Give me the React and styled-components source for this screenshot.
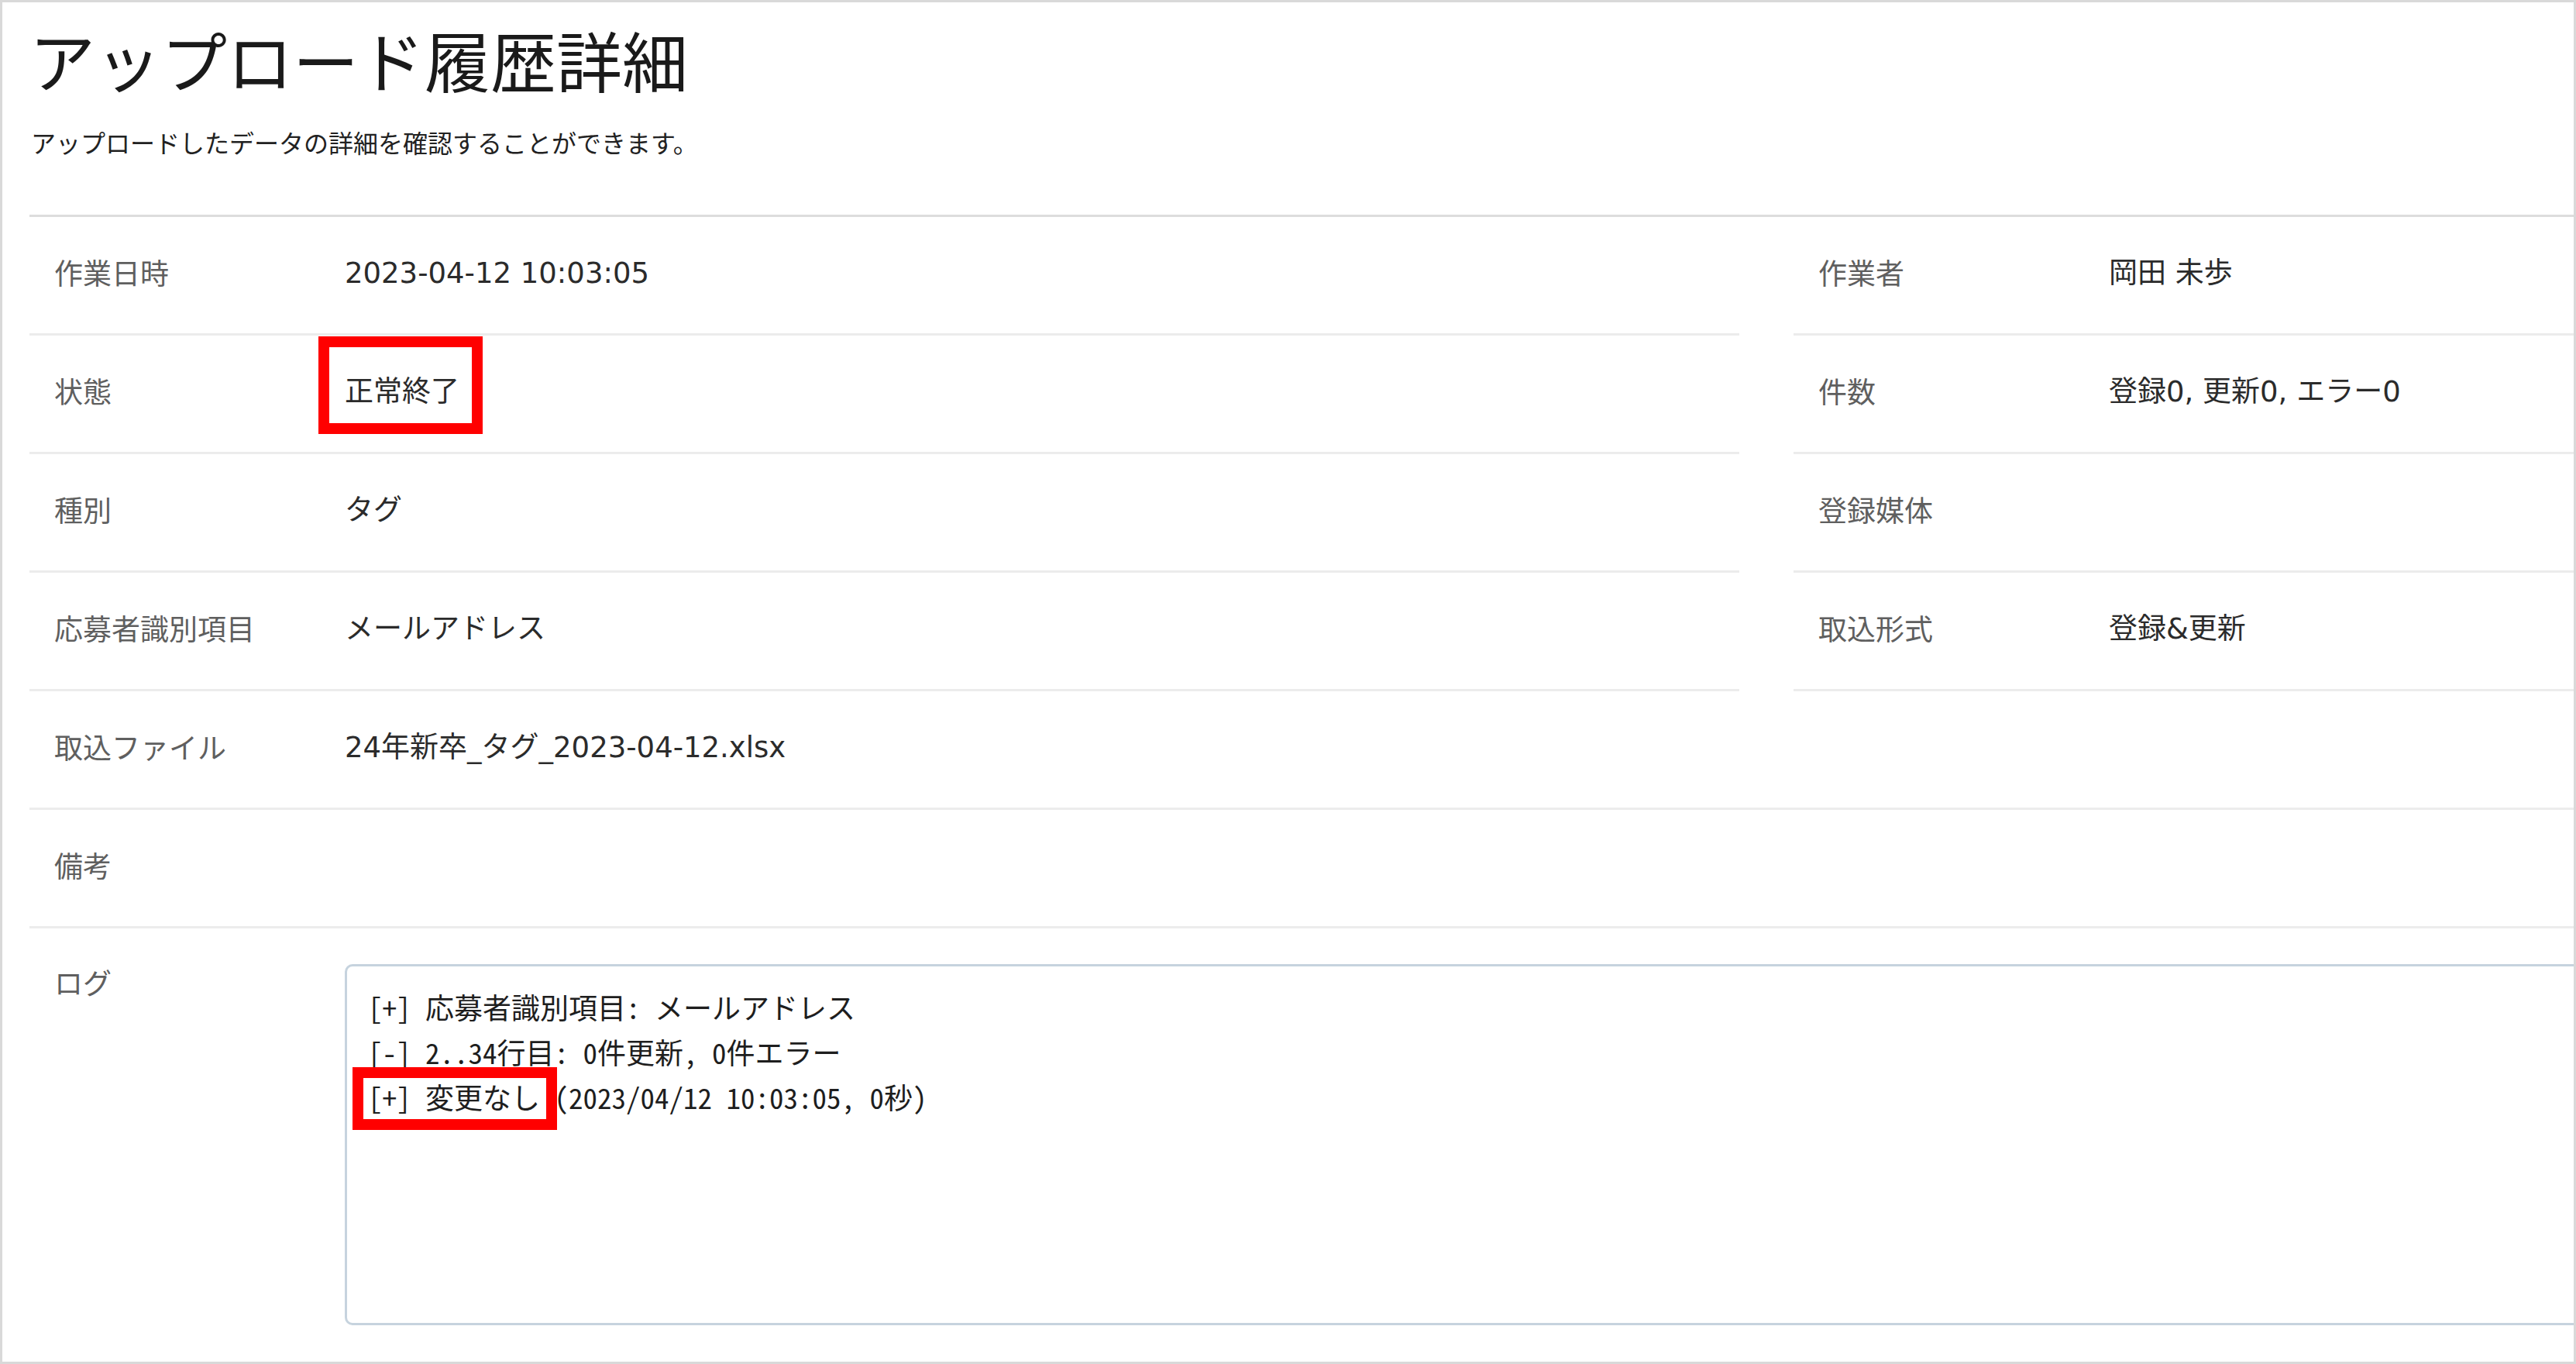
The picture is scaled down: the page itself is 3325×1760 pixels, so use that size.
import React from 'react'
import styled, {createGlobalStyle} from 'styled-components'

const GlobalStyle = createGlobalStyle`
	html, body {
		margin: 0;
		padding: 0;
		background: #ffffff;
	}
	body {
		font-family: "Noto Sans CJK JP", "Noto Sans", sans-serif;
		color: #333333;
	}
`

const summaryLeft = [
	{label: '作業日時', value: '2023-04-12 10:03:05'},
	{label: '状態', value: '正常終了', marked: true},
	{label: '種別', value: 'タグ'},
	{label: '応募者識別項目', value: 'メールアドレス'},
]

const summaryRight = [
	{label: '作業者', value: '岡田 未歩'},
	{label: '件数', value: '登録0, 更新0, エラー0'},
	{label: '登録媒体', value: ''},
	{label: '取込形式', value: '登録&更新'},
]

const logLines = [
	{text: '[+] 応募者識別項目: メールアドレス'},
	{text: '[-] 2..34行目: 0件更新, 0件エラー'},
	{text: '[+] 変更なし', rest: ' (2023/04/12 10:03:05, 0秒)', marked: true},
]

export default function App() {
	return (
		<>
			<GlobalStyle/>
			<Frame>
				<Sheet>
					<Header>
						<Title>アップロード履歴詳細</Title>
						<Lead>アップロードしたデータの詳細を確認することができます。</Lead>
					</Header>

					<Split>
						<Column>
							{summaryLeft.map(item => (
								<Row key={item.label}>
									<Label>{item.label}</Label>
									<Value>
										{item.marked
											? <Marked top={-50} right={-30} bottom={-33} left={-34}>{item.value}</Marked>
											: item.value}
									</Value>
								</Row>
							))}
						</Column>
						<Column>
							{summaryRight.map(item => (
								<Row key={item.label}>
									<Label>{item.label}</Label>
									<Value>{item.value}</Value>
								</Row>
							))}
						</Column>
					</Split>

					<Row>
						<Label>取込ファイル</Label>
						<Value>24年新卒_タグ_2023-04-12.xlsx</Value>
					</Row>
					<Row>
						<Label>備考</Label>
						<Value/>
					</Row>
					<Row $top>
						<Label>ログ</Label>
						<LogBox>
							{logLines.map((line, i) => (
								<LogLine key={i}>
									{line.marked
										? <Marked top={-11} right={-22} bottom={-16} left={-20}>{line.text}</Marked>
										: line.text}
									{line.rest}
								</LogLine>
							))}
						</LogBox>
					</Row>
				</Sheet>
			</Frame>
		</>
	)
}


const Frame = styled.div`
	width: 3325px;
	height: 1760px;
	box-sizing: border-box;
	border: 3px solid #d9d9d9;
	overflow: hidden;
	background: #ffffff;
`

const Sheet = styled.div`
	width: 4600px;
	padding-left: 35px;
`

const Header = styled.div`
	height: 277px;
	border-bottom: 3px solid #dddddd;
	box-sizing: border-box;
	padding-top: 18px;
`

const Title = styled.h1`
	margin: 0;
	font-size: 85px;
	font-weight: 400;
	line-height: 110px;
	color: #1a1a1a;
	letter-spacing: 0;
`

const Lead = styled.p`
	margin: 30px 0 0 2px;
	font-size: 32px;
	line-height: 44px;
	color: #222222;
`

const Split = styled.div`
	display: grid;
	grid-template-columns: 2207px 2207px;
	column-gap: 70px;
`

const Column = styled.div`
	display: flex;
	flex-direction: column;
`

const Row = styled.div`
	display: flex;
	align-items: ${({$top}) => $top ? 'flex-start' : 'center'};
	height: ${({$top}) => $top ? 'auto' : '142px'};
	box-sizing: content-box;
	padding: ${({$top}) => $top ? '46px 0 0' : '0 0 8px'};
	border-bottom: ${({$top}) => $top ? 'none' : '3px solid #ececec'};
	font-size: 37px;
	line-height: 46px;
`

const Label = styled.div`
	flex: 0 0 375px;
	padding-left: 32px;
	color: #5f5f5f;
`

const Value = styled.div`
	flex: 1;
	padding-top: 4px;
	font-family: "DejaVu Sans", "Noto Sans CJK JP", sans-serif;
	color: #2b2b2b;
`

const Marked = styled.span`
	position: relative;
	&::after {
		content: '';
		position: absolute;
		top: ${({top}) => top}px;
		right: ${({right}) => right}px;
		bottom: ${({bottom}) => bottom}px;
		left: ${({left}) => left}px;
		border: 14px solid #ff0000;
		pointer-events: none;
	}
`

const LogBox = styled.div`
	flex: 1;
	height: 466px;
	box-sizing: border-box;
	border: 3px solid #c6d3de;
	border-radius: 10px;
	padding: 23px 27px;
	font-family: "Noto Sans Mono CJK JP", "Liberation Mono", "Noto Sans CJK JP", monospace;
	font-size: 37px;
	line-height: 58px;
	color: #1e1e1e;
`

const LogLine = styled.div`
	white-space: pre;
`
